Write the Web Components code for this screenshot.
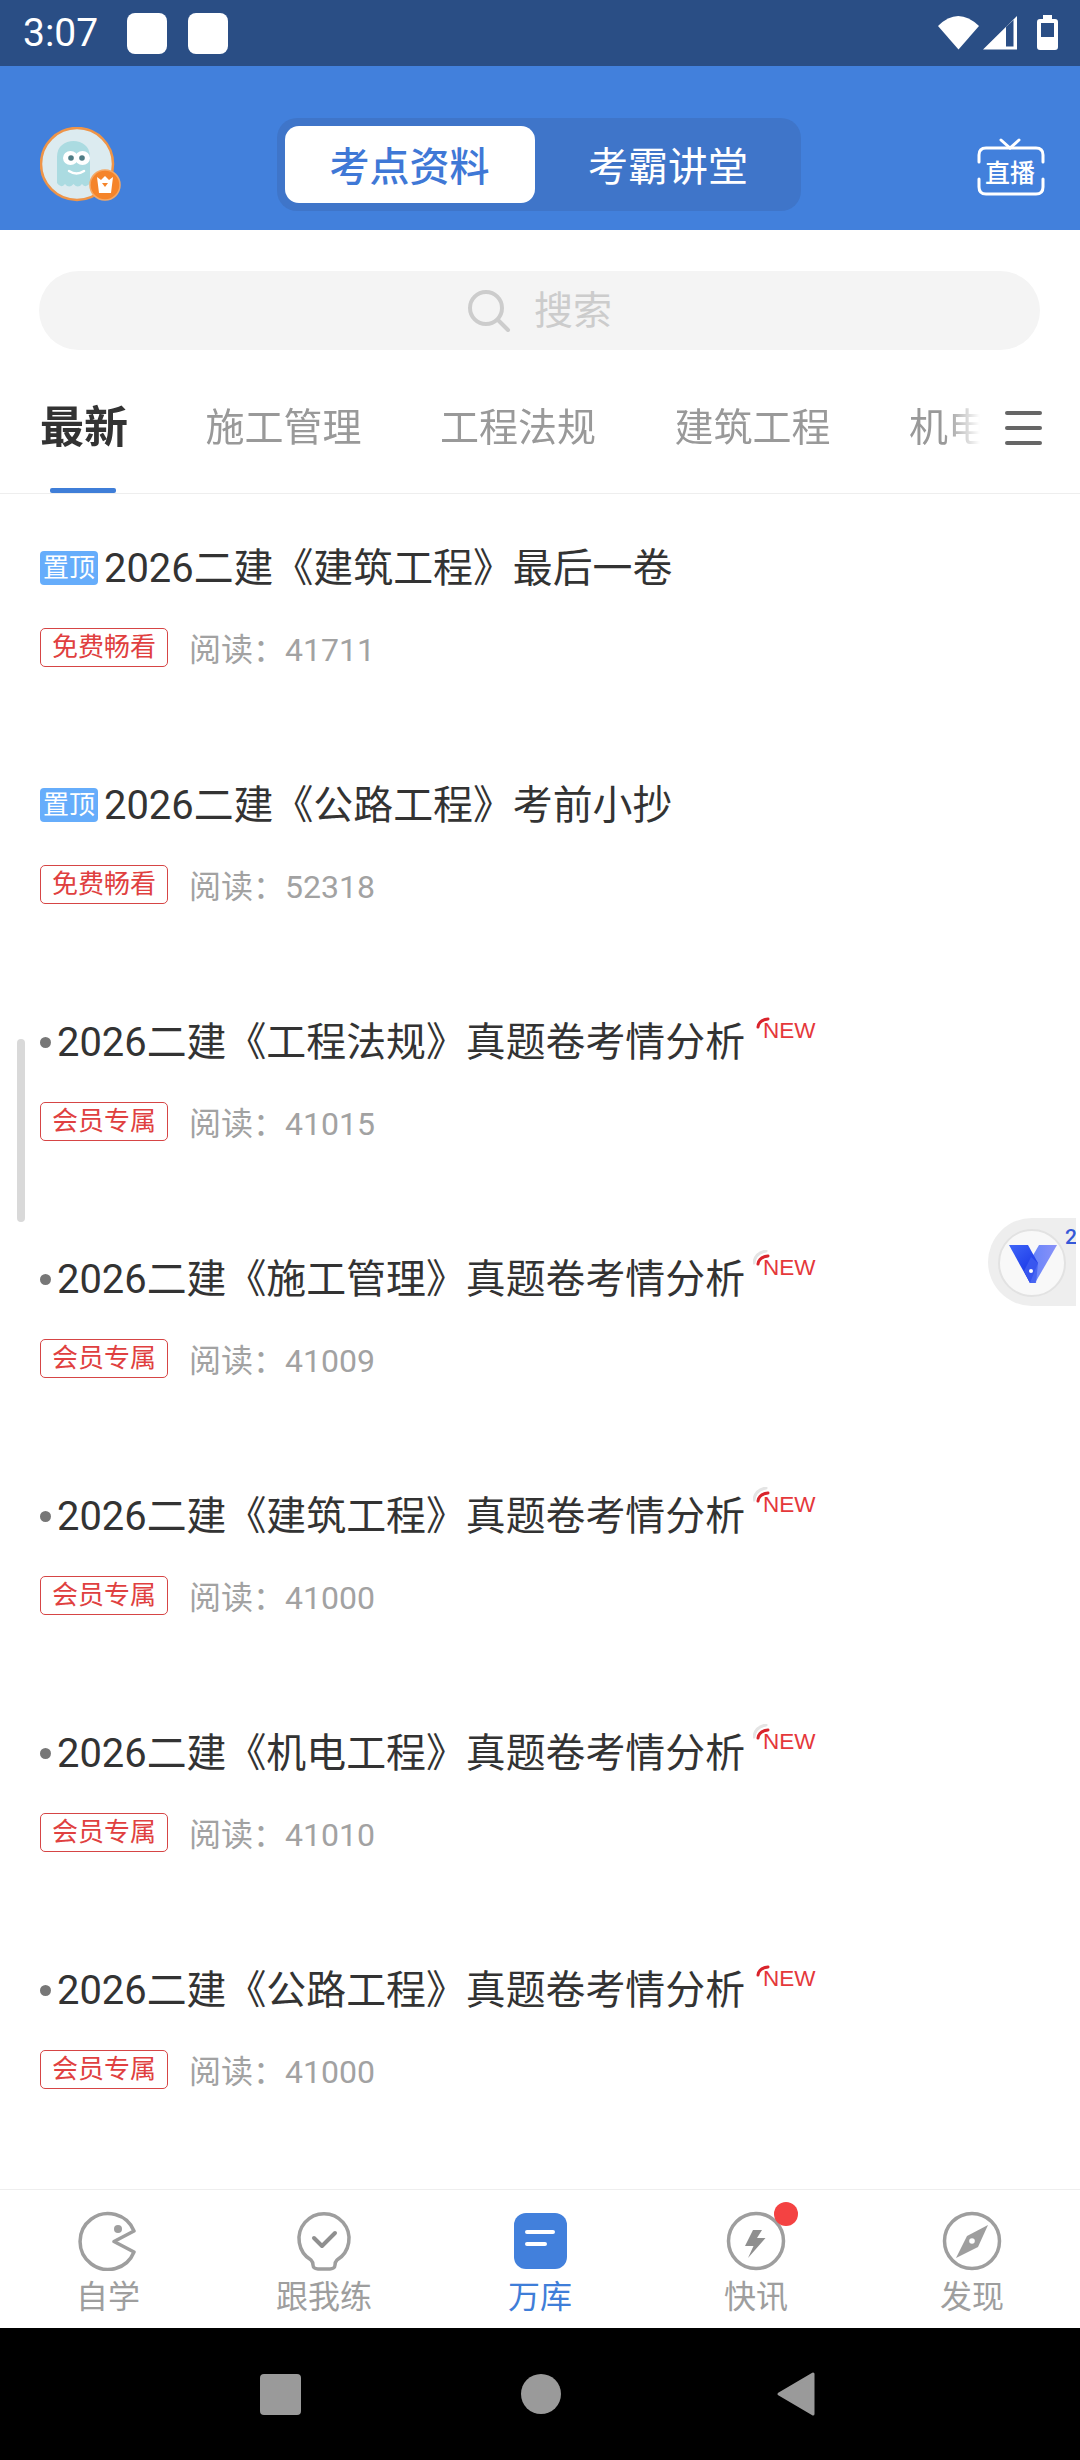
<!DOCTYPE html>
<html lang="zh-CN">
<head>
<meta charset="utf-8">
<title>万库</title>
<style>
	html, body {
		margin: 0;
		padding: 0;
		background: #fff;
	}
	body {
		width: 1080px;
		height: 2460px;
		position: relative;
		display: flex;
		flex-direction: column;
		overflow: hidden;
		font-family: Roboto, "Noto Sans CJK SC", sans-serif;
	}
</style>
</head>
<body>
	<status-bar></status-bar>
	<app-header></app-header>
	<search-box></search-box>
	<cat-tabs></cat-tabs>
	<doc-list>
		<doc-item pin tag="免费畅看" reads="41711">2026二建《建筑工程》最后一卷</doc-item>
		<doc-item pin tag="免费畅看" reads="52318">2026二建《公路工程》考前小抄</doc-item>
		<doc-item fresh tag="会员专属" reads="41015">2026二建《工程法规》真题卷考情分析</doc-item>
		<doc-item fresh wave tag="会员专属" reads="41009">2026二建《施工管理》真题卷考情分析</doc-item>
		<doc-item fresh wave tag="会员专属" reads="41000">2026二建《建筑工程》真题卷考情分析</doc-item>
		<doc-item fresh wave tag="会员专属" reads="41010">2026二建《机电工程》真题卷考情分析</doc-item>
		<doc-item fresh tag="会员专属" reads="41000">2026二建《公路工程》真题卷考情分析</doc-item>
	</doc-list>
	<bottom-nav></bottom-nav>
	<system-nav></system-nav>
	<float-ball></float-ball>

<script>
class StatusBar extends HTMLElement {
	constructor() {
		super();
		const shadow = this.attachShadow({ mode: 'open' });
		shadow.innerHTML = `
			<style>
				:host {
					display: flex;
					align-items: center;
					height: 66px;
					padding: 0 21px 0 23px;
					background: #2a4e85;
					color: #fff;
					font: 400 39px/66px Roboto, sans-serif;
				}
				.note {
					width: 40px;
					height: 41px;
					border-radius: 8px;
					background: #fff;
				}
				.time { width: 104px; }
				.note + .note { margin-left: 21px; }
				svg { margin-left: auto; display: block; }
			</style>
			<span class="time">3:07</span>
			<span class="note"></span>
			<span class="note"></span>
			<svg width="124" height="66" viewBox="935 0 124 66">
				<path d="M938 26 Q958 6 979 26 L958.5 49.5 Z" fill="#fff"/>
				<path d="M983 49.5 L1017 16 V49.5 Z M1006 27 V46.5 H1013.5 V20 Z" fill="#fff" fill-rule="evenodd"/>
				<path d="M1043 15 H1052 V19 H1055 Q1058 19 1058 22 V47 Q1058 50 1055 50 H1040 Q1037 50 1037 47 V22 Q1037 19 1040 19 H1043 Z M1041 23 V37 H1054 V23 Z" fill="#fff" fill-rule="evenodd"/>
			</svg>
		`;
	}
}

class AppHeader extends HTMLElement {
	constructor() {
		super();
		const shadow = this.attachShadow({ mode: 'open' });
		shadow.innerHTML = `
			<style>
				:host {
					display: flex;
					align-items: center;
					justify-content: space-between;
					height: 164px;
					padding: 32px 35px 0 40px;
					background: #4280dc;
					box-sizing: border-box;
				}
				.avatar { width: 84px; height: 84px; margin-top: 10px; display: block; }
				.segment {
					display: flex;
					width: 524px;
					height: 93px;
					padding: 8px;
					box-sizing: border-box;
					border-radius: 20px;
					background: #3f75c9;
					font: 400 40px/77px "Noto Sans CJK SC", sans-serif;
					color: #fff;
					margin-top: 1px;
					margin-left: -24px;
				}
				.segment span { flex: 0 0 250px; text-align: center; }
				.segment span + span { flex: 1; margin-left: 9px; }
				.segment .on {
					background: #fff;
					border-radius: 14px;
					color: #3f78d6;
					font-weight: 500;
				}
				.live {
					position: relative;
					width: 68px;
					height: 58px;
					margin-top: 5px;
				}
				.live svg { display: block; }
				.live span {
					position: absolute;
					left: 8px;
					top: 20px;
					color: #fff;
					font: 500 25px/26px "Noto Sans CJK SC", sans-serif;
					white-space: nowrap;
				}
			</style>
			<svg class="avatar" viewBox="0 0 84 84">
				<circle cx="37" cy="37" r="36" fill="#dcebf0" stroke="#ee9448" stroke-width="2.5"/>
				<path d="M17 56 V30 C17 19 25 14 33.5 14 C42 14 50 19 50 30 V56 Q46 62 42 57 Q38 62 33.5 57 Q29 62 25 57 Q21 62 17 56 Z" fill="#abdbe1"/>
				<ellipse cx="30.5" cy="31" rx="7.5" ry="7" fill="#fff"/>
				<ellipse cx="42.5" cy="31" rx="7.5" ry="7" fill="#fff"/>
				<circle cx="31" cy="31" r="2.8" fill="#4f7d85"/>
				<circle cx="42" cy="31" r="2.8" fill="#4f7d85"/>
				<path d="M29 44 Q36.5 49 44 44" fill="none" stroke="#fff" stroke-width="2.5" stroke-linecap="round"/>
				<circle cx="65" cy="58" r="15" fill="#f5842a" stroke="#f4a866" stroke-width="1.5"/>
				<path d="M57 50 L61 53 L65 49 L69 53 L73 50 L71 66 H59 Z" fill="#fff"/>
				<path d="M62 56 H68 L65 60 Z" fill="#f5842a"/>
			</svg>
			<div class="segment"><span class="on">考点资料</span><span>考霸讲堂</span></div>
			<div class="live">
				<svg width="68" height="58" viewBox="0 0 68 58" fill="none" stroke="#fff" stroke-width="3" stroke-linecap="round">
					<path d="M24 2 L33 10 L42 2"/>
					<path d="M2 24 V17 Q2 10 9 10 H59 Q66 10 66 17 V24"/>
					<path d="M2 41 V49 Q2 56 9 56 H59 Q66 56 66 49 V41"/>
				</svg>
				<span>直播</span>
			</div>
		`;
	}
}

class SearchBox extends HTMLElement {
	constructor() {
		super();
		const shadow = this.attachShadow({ mode: 'open' });
		shadow.innerHTML = `
			<style>
				:host {
					display: block;
					padding: 41px 40px 0 39px;
				}
				.box {
					display: flex;
					align-items: center;
					justify-content: center;
					height: 79px;
					border-radius: 40px;
					background: #f4f4f4;
					color: #ccc;
					font: 400 39px/73px "Noto Sans CJK SC", sans-serif;
				}
				svg { display: block; margin-right: 23px; }
				span { padding-bottom: 6px; }
			</style>
			<div class="box">
				<svg width="44" height="42" viewBox="0 0 44 42" fill="none" stroke="#ccc" stroke-width="4" stroke-linecap="round">
					<circle cx="19" cy="18" r="16"/>
					<path d="M31 30 L41 40"/>
				</svg>
				<span>搜索</span>
			</div>
		`;
	}
}

class CatTabs extends HTMLElement {
	constructor() {
		super();
		const shadow = this.attachShadow({ mode: 'open' });
		shadow.innerHTML = `
			<style>
				:host {
					display: flex;
					height: 144px;
					box-sizing: border-box;
					border-bottom: 1px solid #eee;
					font-family: "Noto Sans CJK SC", sans-serif;
				}
				.scroller {
					display: flex;
					gap: 78.5px;
					flex: 0 0 980px;
					box-sizing: border-box;
					padding-left: 40px;
					overflow: hidden;
					-webkit-mask-image: linear-gradient(to right, #000 945px, transparent 980px);
					mask-image: linear-gradient(to right, #000 945px, transparent 980px);
				}
				.tab {
					position: relative;
					flex: none;
					padding-top: 49px;
					font-size: 39px;
					line-height: 50px;
					color: #999;
				}
				.tab.on {
					font-size: 44px;
					font-weight: 700;
					color: #333;
					margin-right: -1px;
				}
				.tab.on::after {
					content: "";
					position: absolute;
					left: 10px;
					bottom: 0;
					width: 66px;
					height: 5px;
					border-radius: 2px;
					background: #3f7ed8;
				}
				.menu {
					display: flex;
					flex-direction: column;
					gap: 11px;
					width: 37px;
					margin: 61px 0 0 25px;
				}
				.menu i {
					display: block;
					height: 4px;
					border-radius: 2px;
					background: #666;
				}
			</style>
			<div class="scroller">
				<span class="tab on">最新</span>
				<span class="tab">施工管理</span>
				<span class="tab">工程法规</span>
				<span class="tab">建筑工程</span>
				<span class="tab">机电工程</span>
			</div>
			<div class="menu"><i></i><i></i><i></i></div>
		`;
	}
}

class DocList extends HTMLElement {
	constructor() {
		super();
		const shadow = this.attachShadow({ mode: 'open' });
		shadow.innerHTML = `
			<style>
				:host {
					display: block;
					flex: 1;
					min-height: 0;
					overflow: hidden;
					position: relative;
					padding-top: 49px;
				}
				.bar {
					position: absolute;
					left: 17px;
					top: 545px;
					width: 8px;
					height: 183px;
					border-radius: 4px;
					background: #d9d9d9;
				}
			</style>
			<slot></slot>
			<div class="bar"></div>
		`;
	}
}

class DocItem extends HTMLElement {
	constructor() {
		super();
		const shadow = this.attachShadow({ mode: 'open' });
		const pin = this.hasAttribute('pin');
		const fresh = this.hasAttribute('fresh');
		const wave = this.hasAttribute('wave');
		shadow.innerHTML = `
			<style>
				:host {
					display: block;
					height: 237px;
					padding-left: 40px;
					box-sizing: border-box;
					font-family: Roboto, "Noto Sans CJK SC", sans-serif;
				}
				.title {
					display: flex;
					align-items: center;
					height: 50px;
					font-size: 39.9px;
					line-height: 50px;
					color: #333;
					white-space: nowrap;
				}
				.text { padding-top: 2px; }
				.pin {
					flex: none;
					width: 58px;
					height: 34px;
					margin-right: 6px;
					border-radius: 4px;
					background: #66adfb;
					color: #fff;
					font-size: 26px;
					line-height: 34px;
					text-align: center;
				}
				.dot {
					flex: none;
					width: 11px;
					height: 11px;
					margin-right: 6px;
					border-radius: 50%;
					background: #777;
				}
				.new {
					position: relative;
					align-self: flex-start;
					margin-left: 18px;
					color: #e5383b;
					font: 400 22.5px/28px "Liberation Sans", sans-serif;
				}
				.new svg {
					position: absolute;
					left: -10px;
					top: -4px;
					display: block;
				}
				.meta {
					display: flex;
					align-items: flex-start;
					margin-top: 35px;
				}
				.tag {
					width: 128px;
					height: 39px;
					box-sizing: border-box;
					border: 1px solid #d64545;
					border-radius: 5px;
					color: #e04040;
					font-size: 26px;
					line-height: 37px;
					text-align: center;
				}
				.reads {
					margin: 3px 0 0 21px;
					font-size: 32px;
					line-height: 39px;
					color: #a2a2a2;
				}
			</style>
			<div class="title">
				${pin ? '<span class="pin">置顶</span>' : ''}
				${fresh ? '<span class="dot"></span>' : ''}
				<span class="text"><slot></slot></span>
				${fresh ? `<span class="new">
					<svg width="24" height="24" viewBox="0 0 24 24" fill="none" stroke-linecap="round">
						${wave ? '<path d="M1 13 Q2 3 13 1" stroke="#e4e4e4" stroke-width="3"/>' : ''}
						<path d="M5 14 Q6 7 15 6" stroke="#d9232b" stroke-width="3"/>
					</svg>NEW</span>` : ''}
			</div>
			<div class="meta">
				<span class="tag">${this.getAttribute('tag')}</span>
				<span class="reads">阅读：${this.getAttribute('reads')}</span>
			</div>
		`;
	}
}

class BottomNav extends HTMLElement {
	constructor() {
		super();
		const shadow = this.attachShadow({ mode: 'open' });
		shadow.innerHTML = `
			<style>
				:host {
					display: grid;
					grid-template-columns: repeat(5, 216px);
					height: 139px;
					box-sizing: border-box;
					border-top: 1px solid #eee;
					background: #fff;
					font-family: "Noto Sans CJK SC", sans-serif;
				}
				.tab {
					position: relative;
					padding-top: 21px;
					text-align: center;
					color: #9e9e9e;
				}
				.tab.on { color: #3f7ed8; }
				svg { display: block; margin: 0 auto; }
				.label {
					height: 41px;
					overflow: hidden;
					font-size: 32px;
					line-height: 46px;
				}
				.badge {
					position: absolute;
					left: 126px;
					top: 12px;
					width: 24px;
					height: 24px;
					border-radius: 50%;
					background: #f44242;
				}
			</style>
			<div class="tab">
				<svg width="60" height="60" viewBox="0 0 60 60" fill="none" stroke="#9e9e9e" stroke-width="3.5" stroke-linejoin="round">
					<path d="M56 20 A28 28 0 1 0 56 41 L36 30.5 Z"/>
					<circle cx="40" cy="18" r="4" fill="#9e9e9e" stroke="none"/>
				</svg>
				<div class="label">自学</div>
			</div>
			<div class="tab">
				<svg width="60" height="60" viewBox="0 0 60 60" fill="none" stroke="#9e9e9e" stroke-width="3.5" stroke-linecap="round" stroke-linejoin="round">
					<path d="M17 49 A25 25 0 1 1 43 49 C41 51 41 52 41 54 C41 57 38 58 36 58 H24 C22 58 19 57 19 54 C19 52 19 51 17 49 Z"/>
					<path d="M20 27 L28 35 L41 22" stroke="#8f8f8f" stroke-width="4"/>
				</svg>
				<div class="label">跟我练</div>
			</div>
			<div class="tab on">
				<svg width="60" height="60" viewBox="0 0 60 60">
					<rect x="4" y="2" width="53" height="56" rx="12" fill="#4280dc"/>
					<path d="M17 21 H43 M17 33 H35" stroke="#fff" stroke-width="4" stroke-linecap="round"/>
				</svg>
				<div class="label">万库</div>
			</div>
			<div class="tab">
				<svg width="60" height="60" viewBox="0 0 60 60" fill="none">
					<circle cx="30" cy="30" r="27.5" stroke="#9e9e9e" stroke-width="3.5"/>
					<path d="M27 19 H36 L31 27 H39.5 L22 47 L27.5 35 H19 Z" fill="#8f8f8f"/>
				</svg>
				<span class="badge"></span>
				<div class="label">快讯</div>
			</div>
			<div class="tab">
				<svg width="60" height="60" viewBox="0 0 60 60" fill="none">
					<circle cx="30" cy="30" r="27.5" stroke="#9e9e9e" stroke-width="3.5"/>
					<path d="M46 14 L36 36 L14 47 L25 25 Z" fill="#9e9e9e"/>
					<circle cx="30" cy="30" r="2.8" fill="#fff"/>
				</svg>
				<div class="label">发现</div>
			</div>
		`;
	}
}

class SystemNav extends HTMLElement {
	constructor() {
		super();
		const shadow = this.attachShadow({ mode: 'open' });
		shadow.innerHTML = `
			<style>
				:host {
					display: flex;
					align-items: center;
					height: 132px;
					padding-left: 260px;
					gap: 220px;
					background: #000;
				}
				.home { width: 41px; height: 41px; border-radius: 4px; background: #9a9a9a; }
				.circle { width: 40px; height: 40px; border-radius: 50%; background: #9a9a9a; }
				svg { display: block; margin-left: -5px; }
			</style>
			<span class="home"></span>
			<span class="circle"></span>
			<svg width="40" height="46" viewBox="0 0 40 46"><path d="M37 3 V43 L3 23 Z" fill="#9a9a9a" stroke="#9a9a9a" stroke-width="3" stroke-linejoin="round"/></svg>
		`;
	}
}

class FloatBall extends HTMLElement {
	constructor() {
		super();
		const shadow = this.attachShadow({ mode: 'open' });
		shadow.innerHTML = `
			<style>
				:host {
					position: absolute;
					left: 988px;
					top: 1218px;
					width: 88px;
					height: 88px;
					overflow: hidden;
					border-radius: 44px 0 0 44px;
					background: #eeeeee;
				}
				.ball {
					position: absolute;
					left: 10px;
					top: 11px;
					width: 68px;
					height: 68px;
					box-sizing: border-box;
					border: 2px solid #e2e2e2;
					border-radius: 50%;
					background: #f8f8f8;
				}
				svg { position: absolute; left: 21px; top: 27px; display: block; }
				.count {
					position: absolute;
					left: 77px;
					top: 6px;
					color: #3558d8;
					font: 500 21px/26px Roboto, sans-serif;
				}
			</style>
			<div class="ball"></div>
			<svg width="48" height="39" viewBox="0 0 48 39">
				<defs>
					<linearGradient id="w" x1="0" y1="0" x2="1" y2="0">
						<stop offset="0" stop-color="#5c80fa"/>
						<stop offset="1" stop-color="#8a92f8"/>
					</linearGradient>
					<linearGradient id="l" x1="0" y1="0" x2="0.6" y2="1">
						<stop offset="0" stop-color="#3f66f8"/>
						<stop offset="1" stop-color="#1530e4"/>
					</linearGradient>
				</defs>
				<path d="M30 0 H48 L26 38 H21 L15 26 Z" fill="url(#w)"/>
				<path d="M0 0 H19 L29 18 L21 38 Z" fill="url(#l)"/>
				<path d="M22 12 L29 18 L27 38 H21 L15 26 Z" fill="#3f5cf0" opacity="0.8"/>
				<circle cx="22" cy="26" r="2" fill="#fff"/>
			</svg>
			<span class="count">2</span>
		`;
	}
}

customElements.define('status-bar', StatusBar);
customElements.define('app-header', AppHeader);
customElements.define('search-box', SearchBox);
customElements.define('cat-tabs', CatTabs);
customElements.define('doc-list', DocList);
customElements.define('doc-item', DocItem);
customElements.define('bottom-nav', BottomNav);
customElements.define('system-nav', SystemNav);
customElements.define('float-ball', FloatBall);
</script>
</body>
</html>
